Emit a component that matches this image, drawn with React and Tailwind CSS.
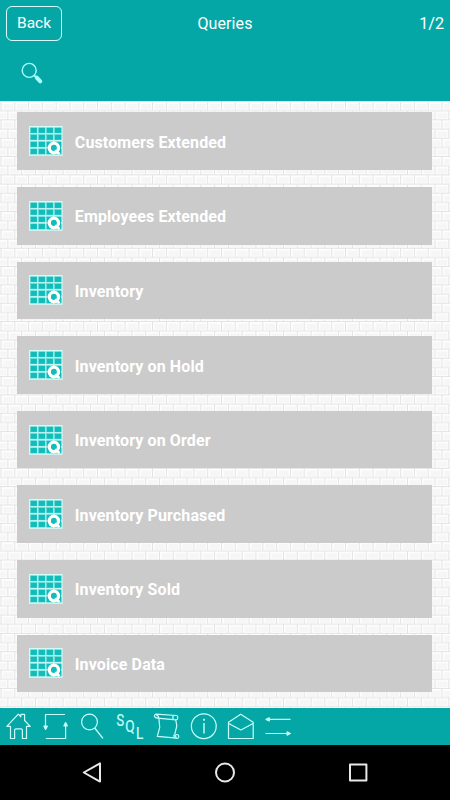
import React from 'react';

const QUERIES = [
  'Customers Extended',
  'Employees Extended',
  'Inventory',
  'Inventory on Hold',
  'Inventory on Order',
  'Inventory Purchased',
  'Inventory Sold',
  'Invoice Data',
];

function BrickBackground() {
  return (
    <svg className="absolute inset-0 h-full w-full" aria-hidden="true">
      <defs>
        <pattern id="bricks" width="13.78" height="18.34" patternUnits="userSpaceOnUse" patternTransform="translate(1.5 1)">
          <rect width="13.78" height="18.34" fill="#fefefe" />
          <g fill="#f6f6f6">
            <rect x="1.6" y="1.8" width="10.2" height="5.6" />
            <rect x="-5.3" y="11" width="10.2" height="5.6" />
            <rect x="8.48" y="11" width="10.2" height="5.6" />
          </g>
          <g fill="#e2e2e2">
            <rect x="0" y="8.3" width="13.78" height="0.95" />
            <rect x="0" y="17.4" width="13.78" height="0.94" />
            <rect x="12.8" y="0" width="0.98" height="8.4" />
            <rect x="5.9" y="9.2" width="0.98" height="8.4" />
          </g>
        </pattern>
      </defs>
      <rect width="100%" height="100%" fill="url(#bricks)" />
    </svg>
  );
}

function QueryIcon() {
  const columns = [1.4, 9.5, 17.5, 25.6];
  const rows = [1.8, 8.7, 15.8, 22.9];
  return (
    <svg className="h-[30px] w-[34px] shrink-0" viewBox="0 0 34 30">
      <rect width="33.6" height="29.8" fill="#d2fbfa" />
      {rows.map((y) =>
        columns.map((x) => (
          <rect key={`${x}-${y}`} x={x + 0.1} y={y} width="6.5" height="5.2" fill="#12bdb9" stroke="#3fcbc8" strokeWidth="0.4" />
        ))
      )}
      <path d="M18.5 16.5h13.6v11.6H18.5z" fill="#12bdb9" />
      <ellipse cx="24.9" cy="21.9" rx="4.6" ry="4.7" fill="#12bdb9" stroke="#fff" strokeWidth="3.3" />
      <path d="M26 24.4l4.6 3.7" stroke="#fff" strokeWidth="2.6" />
    </svg>
  );
}

function Toolbar() {
  return (
    <svg className="block h-[37px] w-[300px]" viewBox="0 708 300 37" fill="none" stroke="#c9fffb" strokeWidth="1.2" strokeLinejoin="round">
      <path d="M6.8 726.3L18.3 714.2l2.5 2.6v-2.5h3.8v6.2l5.6 5.8h-3.7v12.2h-4.1v-8.2q0-1.5-1.5-1.5h-4.8q-1.5 0-1.5 1.5v8.2h-4.1v-12.2z" />
      <path d="M65 714.5H45.5V727M45.8 738.5h19.8v-13" />
      <path d="M43.9 726.2h3.4l-1.7 3.2zM63.9 725.8h3.4l-1.7-3.2z" fill="#e9fffd" />
      <circle cx="89.5" cy="722" r="7.9" />
      <path d="M94.7 728l8.2 10.4" strokeWidth="1.4" />
      <g fill="#c9fffb" stroke="#c9fffb" strokeWidth="0.2" fontFamily="Roboto, sans-serif">
        <text x="116.6" y="725.7" fontSize="16.5" textLength="7.6" lengthAdjust="spacingAndGlyphs">S</text>
        <text x="125.3" y="731.7" fontSize="16.5" textLength="9.4" lengthAdjust="spacingAndGlyphs">Q</text>
        <text x="136" y="739" fontSize="16.5" textLength="7.4" lengthAdjust="spacingAndGlyphs">L</text>
      </g>
      <path d="M156 714.2l20.4 1.3c2 .2 1.8 4.3-.3 4.4l-18.7-1.8c-3.5-.2-3.8-3.4-1.4-3.9zM156.4 715.7c2-.4 2.8 1.2 1.7 2.4M173.8 715.4c-1.4 1-1.3 3.1 0 4.3M158.9 718.3l.8 9-2.4 9.1 19.5 1.8M175.8 720l1 6-2 8.2M174.8 734.3c-2 1.4-.7 4.4 2.2 4.2 2.4-.1 2.5-3.8.1-4-1.9-.2-2.4 2.4-.5 2.5" />
      <circle cx="203.8" cy="726.2" r="12.4" />
      <path d="M204 723v10.6" strokeWidth="1.4" />
      <path d="M204 718.8v2" strokeWidth="1.6" />
      <path d="M228.5 722.2l12.2-7.9 12.5 7.9v16.3h-24.7zM228.7 723.5l12.2 6.5 12.1-6.5" />
      <path d="M268 719.4h22.5M265.5 733.5h23" />
      <path d="M266 719.4l3.3-1.6v3.2zM290.4 733.5l-3.3-1.6v3.2z" fill="#e9fffd" />
    </svg>
  );
}

export default function App() {
  return (
    <div className="flex h-[800px] w-[450px] flex-col overflow-hidden bg-black font-['Roboto',sans-serif] text-white">
      <header className="h-[100.6px] shrink-0 bg-[#04a7a6]">
        <div className="grid h-[45px] grid-cols-3 items-center pl-[6px] pr-[6px]">
          <button className="mt-px h-[35px] w-[56px] justify-self-start rounded-[6px] border border-[#d8ffff] pt-[2px] text-[15.5px] leading-none">
            Back
          </button>
          <h1 className="pt-[2px] text-center text-[16px] leading-5 tracking-[0.12px]">Queries</h1>
          <span className="pt-[2px] text-right text-[16.2px] leading-5">1/2</span>
        </div>
        <button className="ml-[21px] mt-[16px] block" aria-label="Search">
          <svg className="block h-[24px] w-[24px]" viewBox="0 0 24 24" fill="none" stroke="#aaffff">
            <circle cx="8.2" cy="9.4" r="7" strokeWidth="1.4" />
            <path d="M13.2 14.4l2.3 2.3" strokeWidth="1.8" />
            <path d="M15.8 16.7l3.5 3.7" strokeWidth="4" strokeLinecap="round" />
          </svg>
        </button>
      </header>

      <main className="relative min-h-0 flex-1 bg-[#fafafa]">
        <BrickBackground />
        <ul className="relative flex flex-col gap-[17.1px] pl-[17px] pr-[17.6px] pt-[11.9px]">
          {QUERIES.map((name) => (
            <li key={name} className="flex h-[57.5px] items-center gap-[12px] bg-[#cbcbcb] pl-[11.8px]">
              <QueryIcon />
              <span className="pt-[3px] text-[16px] font-bold leading-5 tracking-[0.12px]">{name}</span>
            </li>
          ))}
        </ul>
      </main>

      <div className="h-[37px] shrink-0 bg-[#04a7a6]">
        <Toolbar />
      </div>

      <nav className="h-[55px] shrink-0 bg-black">
        <svg className="block h-[55px] w-[450px]" viewBox="0 745 450 55" fill="none" stroke="#e8e8e8" strokeWidth="2" strokeLinejoin="round">
          <path d="M100 763.4v18.2l-16.2-9.1z" />
          <circle cx="225" cy="772.5" r="9" />
          <rect x="350" y="764.4" width="16.4" height="16.2" />
        </svg>
      </nav>
    </div>
  );
}
